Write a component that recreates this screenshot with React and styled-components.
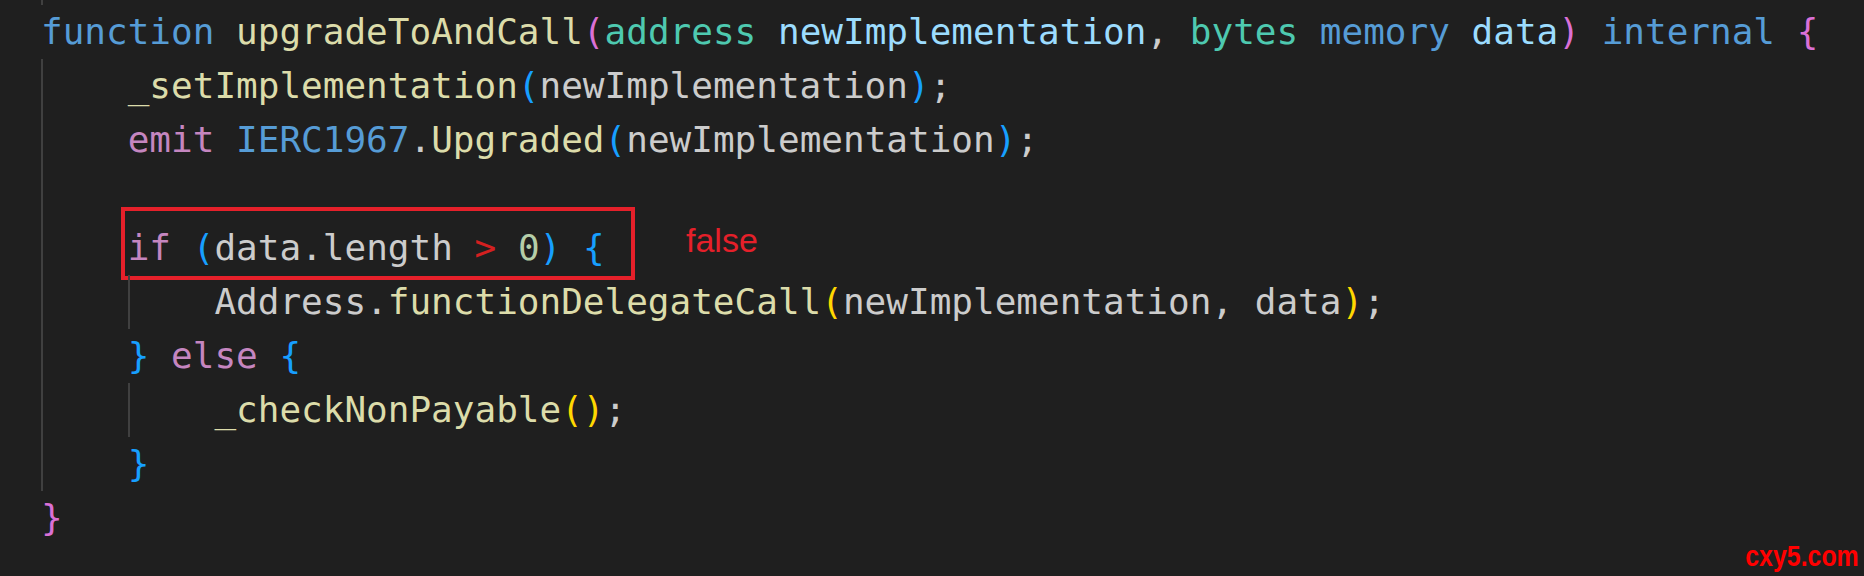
import React from "react";
import styled, { createGlobalStyle } from "styled-components";

const C = {
  bg: "#1f1f1f",
  kw: "#569cd6",
  fn: "#dcdcaa",
  type: "#4ec9b0",
  param: "#9cdcfe",
  text: "#cccccc",
  ctrl: "#c586c0",
  num: "#b5cea8",
  op: "#d42020",
  gold: "#ffd700",
  orchid: "#da70d6",
  blue: "#179fff",
  guide: "#404040",
  note: "#e5202a",
};

const Global = createGlobalStyle`
  html, body { margin: 0; padding: 0; background: ${C.bg}; }
  #root { width: 1864px; height: 576px; }
`;

const Page = styled.div`
  position: relative;
  width: 1864px;
  height: 576px;
  overflow: hidden;
  background: ${C.bg};
`;

const Editor = styled.div`
  display: flex;
  flex-direction: column;
  padding-left: 41px;
  font-family: "DejaVu Sans Mono", "Liberation Mono", monospace;
  font-size: 36px;
  color: ${C.text};
  white-space: pre;
`;

const Line = styled.div`
  position: relative;
  display: flex;
  align-items: stretch;
  height: ${(p) => (p.$h ? `${p.$h}px` : "54px")};
  line-height: 54px;
`;

const Indent = styled.span`
  box-sizing: border-box;
  flex: none;
  width: 4ch;
  border-left: 2px solid ${(p) => (p.$guide ? C.guide : "transparent")};
`;

const Code = styled.span`
  display: inline-block;
`;

const Tok = styled.span`
  color: ${(p) => C[p.$c] || C.text};
`;

const Box = styled.div`
  position: absolute;
  left: 80px;
  top: -14px;
  width: 514px;
  height: 73px;
  box-sizing: border-box;
  border: 4px solid ${C.note};
`;

const Note = styled.span`
  position: absolute;
  left: 645px;
  top: 0;
  font-family: "Liberation Sans", Arial, sans-serif;
  font-size: 34px;
  line-height: normal;
  color: ${C.note};
`;

const Watermark = styled.div`
  position: absolute;
  right: 5px;
  bottom: 5px;
  font-family: "Liberation Sans", Arial, sans-serif;
  font-weight: 700;
  font-size: 30px;
  line-height: 1;
  color: #ff0000;
  transform: scaleX(0.83);
  transform-origin: right center;
`;

const lines = [
  {
    indents: [],
    toks: [
      ["kw", "function"], ["text", " "], ["fn", "upgradeToAndCall"], ["orchid", "("],
      ["type", "address"], ["text", " "], ["param", "newImplementation"], ["text", ", "],
      ["type", "bytes"], ["text", " "], ["kw", "memory"], ["text", " "], ["param", "data"],
      ["orchid", ")"], ["text", " "], ["kw", "internal"], ["text", " "], ["orchid", "{"],
    ],
  },
  {
    indents: [true],
    toks: [["fn", "_setImplementation"], ["blue", "("], ["text", "newImplementation"], ["blue", ")"], ["text", ";"]],
  },
  {
    indents: [true],
    toks: [
      ["ctrl", "emit"], ["text", " "], ["kw", "IERC1967"], ["text", "."], ["fn", "Upgraded"],
      ["blue", "("], ["text", "newImplementation"], ["blue", ")"], ["text", ";"],
    ],
  },
  { indents: [true], toks: [] },
  {
    indents: [true],
    note: true,
    toks: [
      ["ctrl", "if"], ["text", " "], ["blue", "("], ["text", "data.length"], ["text", " "],
      ["op", ">"], ["text", " "], ["num", "0"], ["blue", ")"], ["text", " "], ["blue", "{"],
    ],
  },
  {
    indents: [true, true],
    toks: [
      ["text", "Address."], ["fn", "functionDelegateCall"], ["gold", "("],
      ["text", "newImplementation, data"], ["gold", ")"], ["text", ";"],
    ],
  },
  {
    indents: [true],
    toks: [["blue", "}"], ["text", " "], ["ctrl", "else"], ["text", " "], ["blue", "{"]],
  },
  {
    indents: [true, true],
    toks: [["fn", "_checkNonPayable"], ["gold", "("], ["gold", ")"], ["text", ";"]],
  },
  { indents: [true], toks: [["blue", "}"]] },
  { indents: [], toks: [["orchid", "}"]] },
];

export default function App() {
  return (
    <Page>
      <Global />
      <Editor>
        <Line $h={5}>
          <Indent $guide />
        </Line>
        {lines.map((l, i) => (
          <Line key={i}>
            {l.indents.map((g, j) => (
              <Indent key={j} $guide={g} />
            ))}
            <Code>
              {l.toks.map(([c, t], k) => (
                <Tok key={k} $c={c}>
                  {t}
                </Tok>
              ))}
            </Code>
            {l.note && (
              <>
                <Box />
                <Note>false</Note>
              </>
            )}
          </Line>
        ))}
      </Editor>
      <Watermark>cxy5.com</Watermark>
    </Page>
  );
}
